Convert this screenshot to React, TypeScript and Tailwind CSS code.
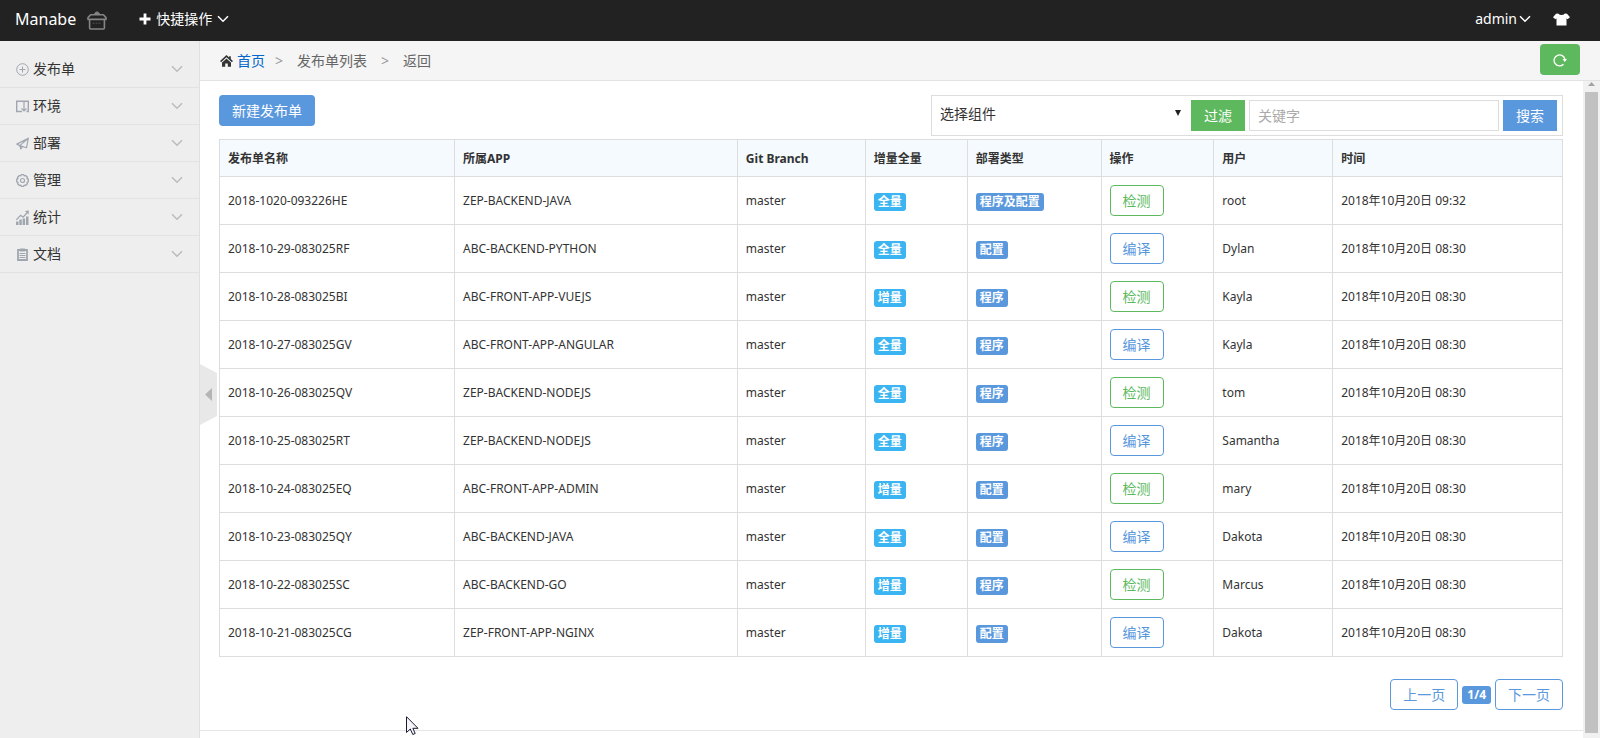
import React from "react";

type Row = {
  name: string;
  app: string;
  scope: string;
  kind: string;
  action: "检测" | "编译";
  user: string;
  time: string;
};

const rows: Row[] = [
  { name: "2018-1020-093226HE", app: "ZEP-BACKEND-JAVA", scope: "全量", kind: "程序及配置", action: "检测", user: "root", time: "2018年10月20日 09:32" },
  { name: "2018-10-29-083025RF", app: "ABC-BACKEND-PYTHON", scope: "全量", kind: "配置", action: "编译", user: "Dylan", time: "2018年10月20日 08:30" },
  { name: "2018-10-28-083025BI", app: "ABC-FRONT-APP-VUEJS", scope: "增量", kind: "程序", action: "检测", user: "Kayla", time: "2018年10月20日 08:30" },
  { name: "2018-10-27-083025GV", app: "ABC-FRONT-APP-ANGULAR", scope: "全量", kind: "程序", action: "编译", user: "Kayla", time: "2018年10月20日 08:30" },
  { name: "2018-10-26-083025QV", app: "ZEP-BACKEND-NODEJS", scope: "全量", kind: "程序", action: "检测", user: "tom", time: "2018年10月20日 08:30" },
  { name: "2018-10-25-083025RT", app: "ZEP-BACKEND-NODEJS", scope: "全量", kind: "程序", action: "编译", user: "Samantha", time: "2018年10月20日 08:30" },
  { name: "2018-10-24-083025EQ", app: "ABC-FRONT-APP-ADMIN", scope: "增量", kind: "配置", action: "检测", user: "mary", time: "2018年10月20日 08:30" },
  { name: "2018-10-23-083025QY", app: "ABC-BACKEND-JAVA", scope: "全量", kind: "配置", action: "编译", user: "Dakota", time: "2018年10月20日 08:30" },
  { name: "2018-10-22-083025SC", app: "ABC-BACKEND-GO", scope: "增量", kind: "程序", action: "检测", user: "Marcus", time: "2018年10月20日 08:30" },
  { name: "2018-10-21-083025CG", app: "ZEP-FRONT-APP-NGINX", scope: "增量", kind: "配置", action: "编译", user: "Dakota", time: "2018年10月20日 08:30" },
];

const columns = [
  { label: "发布单名称", width: "w-[17.5%]" },
  { label: "所属APP", width: "w-[21.06%]" },
  { label: "Git Branch", width: "w-[9.52%]" },
  { label: "增量全量", width: "w-[7.59%]" },
  { label: "部署类型", width: "w-[9.97%]" },
  { label: "操作", width: "w-[8.4%]" },
  { label: "用户", width: "w-[8.85%]" },
  { label: "时间", width: "w-[17.11%]" },
];

function Chevron({ className }: { className: string }) {
  return (
    <svg viewBox="0 0 12 8" className={className} fill="none" stroke="currentColor" strokeWidth="1.5" aria-hidden="true">
      <path d="M1 1.2 L6 6.2 L11 1.2" />
    </svg>
  );
}

function PlusCircle() {
  return (
    <svg viewBox="0 0 13 13" className="size-[13px]" fill="none" stroke="currentColor" aria-hidden="true">
      <circle cx="6.5" cy="6.5" r="5.8" />
      <path d="M3.5 6.5h6M6.5 3.5v6" />
    </svg>
  );
}

function EnvIcon() {
  return (
    <svg viewBox="0 0 13 13" className="size-[13px]" fill="none" stroke="currentColor" aria-hidden="true">
      <path d="M6 11.500H.7V1.200H12.300V11.500H10.500" strokeWidth="1.4" />
      <path d="M8 1.500V10.500M5.500 8.500L8 11l2.500-2.500" strokeWidth="1.2" />
    </svg>
  );
}

function PlaneIcon() {
  return (
    <svg viewBox="0 0 13 13" className="size-[13px]" fill="none" stroke="currentColor" strokeWidth="1.2" strokeLinejoin="round" aria-hidden="true">
      <path d="M12.300 1.200L.8 7.100l3 1.500l6.700 2.200zM12.300 1.200L3.800 8.600l1 3.400l1.700-2.400" />
    </svg>
  );
}

function GearIcon() {
  return (
    <svg viewBox="0 0 13 13" className="size-[13px]" fill="none" stroke="currentColor" aria-hidden="true">
      <path d="M5.300.7h2.400l.6 1.200l1.300-.4l1.800 1.800l-.4 1.300l1.300.6v2.600l-1.300.6l.4 1.300l-1.800 1.800l-1.300-.4l-.6 1.200h-2.400l-.6-1.200l-1.300.4l-1.800-1.800l.4-1.300l-1.300-.6v-2.600l1.300-.6l-.4-1.300l1.800-1.800l1.300.4z" strokeWidth="1.300" strokeLinejoin="round" />
      <circle cx="6.500" cy="6.500" r="2" strokeWidth="1.200" />
    </svg>
  );
}

function StatsIcon() {
  return (
    <svg viewBox="0 0 13 15" className="h-[15px] w-[13px]" fill="currentColor" aria-hidden="true">
      <path d="M0 11.500h2.500v3.500h-2.500zM3.300 9.500h2.500v5.500h-2.500zM6.600 8.500h2.500v6.500h-2.500zM10 6.500h2.500v8.500h-2.500z" />
      <path d="M.3 9.800l4.300-4.500l2.500 1.800l4-4.300" fill="none" stroke="currentColor" strokeWidth="1.300" />
      <path d="M12.800.5v4l-4-3.500z" />
    </svg>
  );
}

function DocIcon() {
  return (
    <svg viewBox="0 0 13 13" className="size-[13px]" aria-hidden="true">
      <path d="M2 2h9v10h-9z" fill="none" stroke="currentColor" strokeWidth="1.800" />
      <path d="M4 .5h5v3h-5z" fill="currentColor" />
      <path d="M3.500 5.500h6M3.500 7.500h6M3.500 9.500h6" stroke="currentColor" />
    </svg>
  );
}

const menu: { label: string; icon: React.ReactNode }[] = [
  { label: "发布单", icon: <PlusCircle /> },
  { label: "环境", icon: <EnvIcon /> },
  { label: "部署", icon: <PlaneIcon /> },
  { label: "管理", icon: <GearIcon /> },
  { label: "统计", icon: <StatsIcon /> },
  { label: "文档", icon: <DocIcon /> },
];

function Header() {
  return (
    <header className="flex h-[41px] shrink-0 items-center bg-[#222] text-sm text-white">
      <a href="#" className="pb-1 pl-[15px] text-base">Manabe</a>
      <svg viewBox="0 0 20 19" className="ml-[11px] h-[19px] w-5 text-[#858585]" fill="none" stroke="currentColor" strokeWidth="1.600" aria-hidden="true">
        <path d="M3.600 3.800H16.400L19 6.600V8.400H1V6.600z" strokeLinejoin="round" />
        <path d="M2.600 8.500V17q0 1 1 1H16.400q1 0 1-1V8.500" />
        <path d="M7.500 3.200Q8.200.9 10 .9T12.500 3.200z" fill="currentColor" strokeWidth="1" />
        <path d="M5.500 12.200h9" strokeWidth="1" strokeDasharray="2 1" opacity=".45" />
      </svg>
      <button type="button" className="ml-8 flex items-center pb-1">
        <svg viewBox="0 0 12 12" className="mr-[5px] size-3" fill="none" stroke="currentColor" strokeWidth="2.800" aria-hidden="true">
          <path d="M6 .5v11M.5 6h11" />
        </svg>
        快捷操作
        <Chevron className="ml-[5px] h-2 w-3" />
      </button>
      <button type="button" className="ml-auto flex items-center pb-1">
        admin
        <Chevron className="ml-0.5 h-2 w-3" />
      </button>
      <button type="button" aria-label="皮肤" className="mr-[30px] ml-[22px] flex items-center pb-0.5">
        <svg viewBox="0 0 17 13" className="h-[13px] w-[17px]" fill="currentColor" aria-hidden="true">
          <path d="M5 .4Q8.500 3.800 12 .4L14 .8L17 4.200L14.600 6.300L13.500 5.300V12.500H3.500V5.300L2.400 6.300L0 4.200L3 .8z" />
        </svg>
      </button>
    </header>
  );
}

function Sidebar() {
  return (
    <nav className="w-[200px] shrink-0 border-r border-[#e0e0e0] bg-[#eee] pt-2.5">
      <ul>
        {menu.map((item) => (
          <li key={item.label} className="border-b border-[#e2e2e2]">
            <button type="button" className="flex h-9 w-full items-center pr-4 pl-4 text-sm text-[#333]">
              <span className="mr-1 flex w-[13px] justify-center text-[#a0a6b0]">{item.icon}</span>
              {item.label}
              <Chevron className="ml-auto h-2 w-3 text-[#bbb]" />
            </button>
          </li>
        ))}
      </ul>
    </nav>
  );
}

function Breadcrumb() {
  return (
    <div className="flex h-10 shrink-0 items-center border-b border-[#e2e2e2] bg-[#f5f5f5] pr-5 pl-5 text-sm text-[#666]">
      <svg viewBox="0 0 13 12" className="h-3 w-[13px]" aria-hidden="true">
        <path d="M2 7.500L6.500 3.500L11 7.500V11.700H7.800V8.500H5.200V11.700H2z" fill="#333" />
        <path d="M.6 6.600L6.500 1.200L12.400 6.600M10 4V1.200" fill="none" stroke="#333" strokeWidth="1.600" />
        <path d="M1.300 7.700L6.500 3L11.700 7.700" fill="none" stroke="#f5f5f5" strokeWidth=".5" />
      </svg>
      <a href="#" className="ml-1 text-[#06c]">首页</a>
      <span className="ml-2.5 text-[#999]">&gt;</span>
      <a href="#" className="ml-3.5">发布单列表</a>
      <span className="ml-3.5 text-[#999]">&gt;</span>
      <a href="#" className="ml-3.5">返回</a>
      <button type="button" aria-label="刷新" className="mb-0.5 ml-auto flex h-[31px] w-10 items-center justify-center rounded bg-[#5eb95e] text-white">
        <svg viewBox="0 0 14 14" className="size-3.5" fill="none" stroke="currentColor" strokeWidth="1.300" aria-hidden="true">
          <path d="M10.500 11.300A5.500 5.500 0 1 1 12 6.500" />
          <path d="M9.500 6h4.500l-2.200 3z" fill="currentColor" stroke="none" />
        </svg>
      </button>
    </div>
  );
}

function Toolbar() {
  return (
    <div className="flex items-start justify-between">
      <button type="button" className="h-[31px] rounded bg-[#5a98de] px-[13px] text-sm text-white">新建发布单</button>
      <form className="flex gap-1 border border-[#ddd] p-1 pr-[5px]">
        <div className="relative">
          <select aria-label="选择组件" className="h-7 w-[251px] appearance-none bg-transparent px-1 text-sm text-[#333]">
            <option>选择组件</option>
          </select>
          <svg viewBox="0 0 6 6" className="pointer-events-none absolute top-2.5 right-1.5 size-1.5" fill="#222" aria-hidden="true">
            <path d="M0 0h6L3 6z" />
          </svg>
        </div>
        <button type="button" className="h-[31px] w-[54px] bg-[#5eb95e] text-sm text-white">过滤</button>
        <input type="text" aria-label="关键字" placeholder="关键字" className="h-[31px] w-[250px] border border-[#ddd] px-2 text-sm placeholder:text-[#aaa]" />
        <button type="submit" className="h-[31px] w-[54px] bg-[#5a98de] text-sm text-white">搜索</button>
      </form>
    </div>
  );
}

function ReleaseTable() {
  return (
    <table className="mt-[3px] w-full table-fixed border-collapse text-xs text-[#333]">
      <thead>
        <tr className="h-[37px] bg-[#f5fafe]">
          {columns.map((c) => (
            <th key={c.label} scope="col" className={`${c.width} border border-[#ddd] px-2 pt-0.5 text-left font-bold`}>{c.label}</th>
          ))}
        </tr>
      </thead>
      <tbody>
        {rows.map((r) => (
          <tr key={r.name} className="h-12">
            <td className="border border-[#ddd] px-2">{r.name}</td>
            <td className="border border-[#ddd] px-2">{r.app}</td>
            <td className="border border-[#ddd] px-2">master</td>
            <td className="border border-[#ddd] px-2">
              <span className="mt-0.5 flex h-[18px] w-fit items-center rounded-[3px] bg-[#3bb4f2] px-1 font-bold text-white">{r.scope}</span>
            </td>
            <td className="border border-[#ddd] px-2">
              <span className="mt-0.5 flex h-[18px] w-fit items-center rounded-[3px] bg-[#5a98de] px-1 font-bold text-white">{r.kind}</span>
            </td>
            <td className="border border-[#ddd] px-2">
              <button
                type="button"
                className={
                  r.action === "检测"
                    ? "block h-[31px] w-[54px] rounded border border-[#5eb95e] text-sm text-[#5eb95e]"
                    : "block h-[31px] w-[54px] rounded border border-[#5a98de] text-sm text-[#5a98de]"
                }
              >
                {r.action}
              </button>
            </td>
            <td className="border border-[#ddd] px-2">{r.user}</td>
            <td className="border border-[#ddd] px-2">{r.time}</td>
          </tr>
        ))}
      </tbody>
    </table>
  );
}

function Pagination() {
  return (
    <div className="mt-[22px] flex items-center justify-end gap-1">
      <button type="button" className="h-[31px] w-[68px] rounded border border-[#5a98de] text-sm text-[#5a98de]">上一页</button>
      <span className="flex h-[18px] items-center rounded-[3px] bg-[#5a98de] px-[5px] text-xs font-bold text-white">1/4</span>
      <button type="button" className="h-[31px] w-[68px] rounded border border-[#5a98de] text-sm text-[#5a98de]">下一页</button>
    </div>
  );
}

export default function App() {
  return (
    <div className="relative flex h-screen flex-col overflow-hidden bg-white font-['Noto_Sans','Noto_Sans_CJK_SC',sans-serif]">
      <Header />
      <div className="flex min-h-0 flex-1">
        <Sidebar />
        <div className="relative flex min-w-0 flex-1 flex-col">
          <Breadcrumb />
          <div className="flex min-h-0 flex-1">
            <main className="min-w-0 flex-1 overflow-hidden">
              <div className="border-b border-[#e5e5e5] px-5 pt-3.5 pb-5 pl-[19px]">
                <Toolbar />
                <ReleaseTable />
                <Pagination />
              </div>
            </main>
            <div className="flex w-[17px] shrink-0 flex-col items-center bg-[#f1f1f1] pb-[5px]" aria-hidden="true">
              <svg viewBox="0 0 7 4" className="mt-px mb-1.5 h-1 w-[7px] shrink-0" fill="#a3a3a3">
                <path d="M0 4L3.500 0L7 4z" />
              </svg>
              <div className="w-[13px] flex-1 bg-[#c1c1c1]" />
            </div>
          </div>
          <button type="button" aria-label="收起菜单" className="absolute top-1/2 left-0 -mt-[26px] h-[61px] w-[17px]">
            <svg viewBox="0 0 17 61" className="h-[61px] w-[17px]" aria-hidden="true">
              <path d="M0 0L17 9V52L0 61z" fill="#e8e8e8" />
              <path d="M5 30.500L12 24V37z" fill="#b5b5b5" />
            </svg>
          </button>
        </div>
      </div>
      <svg viewBox="0 0 13 20" className="pointer-events-none absolute top-[716px] left-[406px] h-5 w-[13px]" aria-hidden="true">
        <path d="M.5.700V16.500L4.300 13L6.800 18.500L9.200 17.500L6.900 12.300H12z" fill="#f6f6fa" stroke="#1a1a33" />
      </svg>
    </div>
  );
}
